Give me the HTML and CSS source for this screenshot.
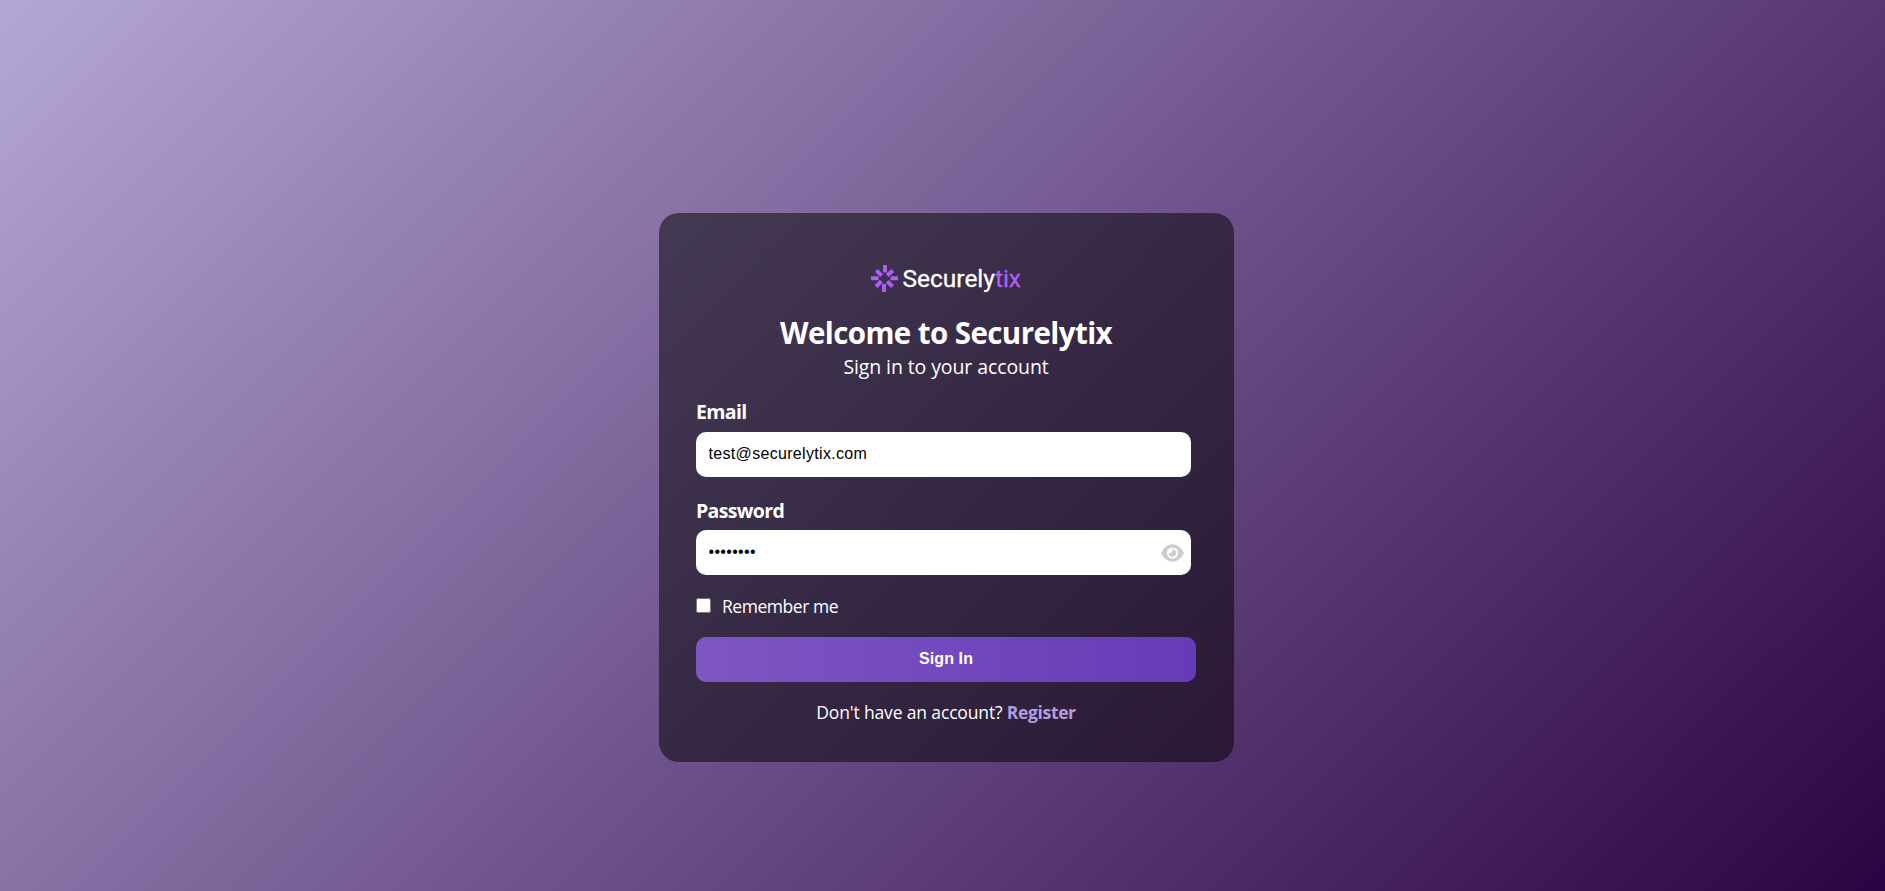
FILE: index.html
```html
<!DOCTYPE html>
<html lang="en">
<head>
<meta charset="utf-8">
<title>Securelytix</title>
<link rel="stylesheet" href="styles.css">
</head>
<body>
<main class="card">
  <div class="logo">
    <svg class="logo-mark" viewBox="0 0 27 27" width="27" height="27" fill="none" stroke="#a95ff8" stroke-width="4">
      <path d="M14 0V7.500M27 13.2H19.500M13 27V19M0 13.2H7.500M21.9 5.400L16.200 10.500M5.400 5.400L10.600 10.600M5 21.500L10.400 16.300M21.500 21.500L16.300 16.300"/>
    </svg>
    <svg class="logo-word" width="122" height="30" viewBox="0 0 122 30"><text x="0.500" y="22" textLength="118.500" lengthAdjust="spacingAndGlyphs">Securely<tspan class="accent">tix</tspan></text></svg>
  </div>
  <h1 class="title">Welcome to Securelytix</h1>
  <p class="subtitle">Sign in to your account</p>
  <form class="form">
    <label class="label email" for="email">Email</label>
    <input class="input" id="email" type="email" value="test@securelytix.com">
    <label class="label password" for="password">Password</label>
    <div class="password-field">
      <input class="input" id="password" type="password" value="password">
      <svg class="eye" viewBox="0 0 576 512" width="23" height="20"><path fill="#ccc" d="M288 32c-80.800 0-145.500 36.800-192.600 80.600C48.600 156 17.300 208 2.500 243.700c-3.300 7.900-3.300 16.700 0 24.600C17.300 304 48.600 356 95.400 399.400C142.500 443.200 207.200 480 288 480s145.500-36.800 192.600-80.600c46.800-43.500 78.100-95.400 93-131.100c3.300-7.900 3.300-16.700 0-24.600c-14.900-35.700-46.200-87.700-93-131.100C433.500 68.800 368.800 32 288 32zM144 256a144 144 0 1 1 288 0 144 144 0 1 1-288 0zm144-64c0 35.300-28.700 64-64 64c-7.100 0-13.900-1.200-20.300-3.300c-5.500-1.800-11.900 1.600-11.700 7.400c.3 6.900 1.300 13.800 3.200 20.700c13.700 51.200 66.400 81.600 117.600 67.900s81.600-66.400 67.900-117.600c-11.100-41.500-47.800-69.400-88.600-71.100c-5.800-.2-9.200 6.100-7.400 11.700c2.100 6.400 3.300 13.200 3.300 20.300z"/></svg>
    </div>
    <div class="remember">
      <input class="check" id="remember" type="checkbox">
      <label class="remember-label" for="remember">Remember me</label>
    </div>
    <button class="submit" type="button">Sign In</button>
  </form>
  <p class="register"><span class="ask">Don't have an account?</span> <a class="link">Register</a></p>
</main>
</body>
</html>
```
FILE: styles.css
```css
* { box-sizing: border-box; }
body {
  margin: 0;
  height: 100vh;
  display: flex;
  justify-content: center;
  padding: 213px 0 0 8px;
  background: linear-gradient(135deg, #b4a7d6, #6f548b 50%, #2c0342);
  color: #fff;
  font-family: "Open Sans", "Noto Sans", sans-serif;
}
h1, p { margin: 0; }
.card {
  width: 575px;
  height: 549px;
  padding: 52px 38px 37px 37px;
  border-radius: 20px;
  background: rgba(0, 0, 0, 0.5);
}
.logo { display: flex; height: 27px; padding-left: 175px; gap: 4px; }
.logo-word { overflow: visible; flex: none; }
.logo-mark { flex: none; }
.logo-word text { font: 400 24px Roboto, sans-serif; fill: #fff; stroke: #fff; stroke-width: 0.3px; }
.logo-word .accent { fill: #a95ff8; stroke: #a95ff8; }
.title { margin-top: 21px; font-size: 29.5px; line-height: 40px; font-weight: 700; letter-spacing: -0.58px; text-align: center; }
.subtitle { font-size: 19.5px; line-height: 27px; letter-spacing: -0.1px; text-align: center; }
.form { margin-top: 19px; }
.label { display: block; font-size: 19.5px; line-height: 26px; font-weight: 700; letter-spacing: -0.65px; margin-bottom: 7px; }
.label.password { margin-top: 21px; margin-bottom: 6px; }
.input {
  display: block;
  width: 495px;
  height: 45px;
  padding: 0 12px 1px 12.5px;
  border: 0;
  border-radius: 10px;
  background: #fff;
  color: #000;
  font: 16px "Liberation Sans", Arial, sans-serif;
  letter-spacing: 0.32px;
}
.password-field { position: relative; }
.eye { position: absolute; left: 465px; top: 13px; }
.remember { display: flex; margin-top: 18px; height: 26px; gap: 11px; font-size: 17.5px; line-height: 26px; }
.remember-label { letter-spacing: -0.45px; }
.check { width: 15px; height: 15px; margin: 5px 0 0; }
.submit {
  display: block;
  width: 500px;
  height: 45px;
  margin-top: 18px;
  padding: 0 0 2px;
  border: 0;
  border-radius: 10px;
  background: linear-gradient(90deg, #7e57c2, #673ab7);
  color: #fff;
  font: bold 16px "Liberation Sans", Arial, sans-serif;
  letter-spacing: 0.1px;
}
.register { margin-top: 17px; font-size: 17.5px; line-height: 26px; letter-spacing: -0.15px; text-align: center; }
.link { color: #b39ddb; font-weight: 700; letter-spacing: -0.35px; }
```
